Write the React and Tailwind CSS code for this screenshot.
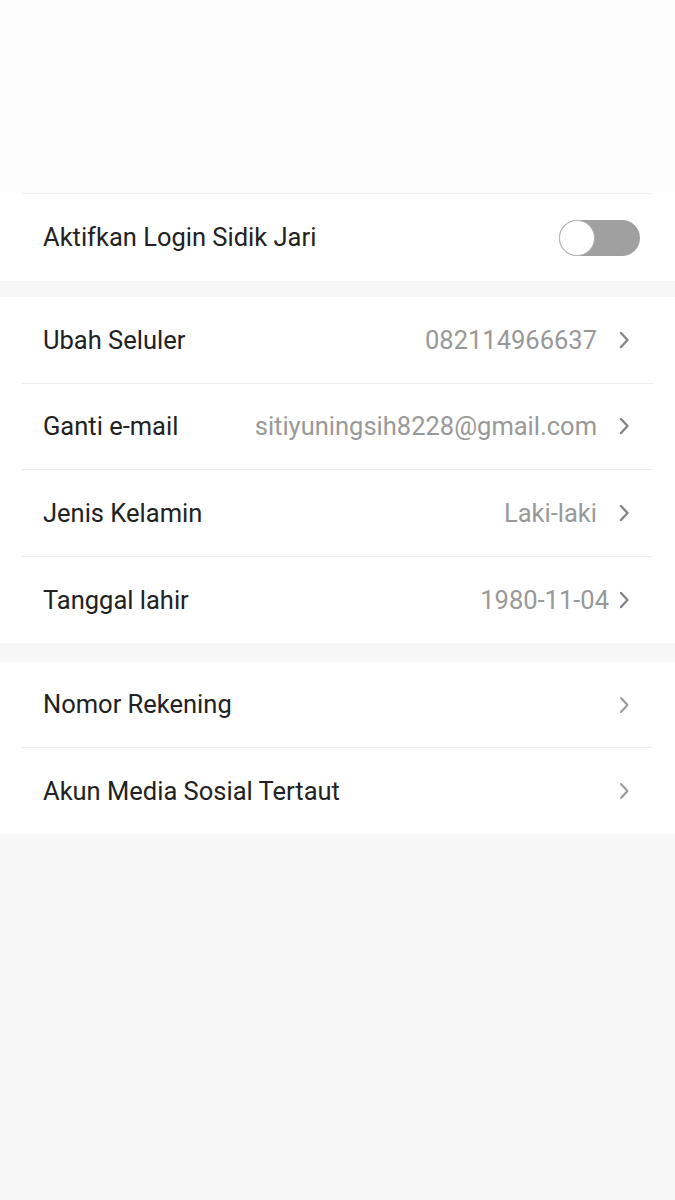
import React from "react";

const Chevron = ({ light }) => (
    <svg
        width="14"
        height="20"
        viewBox="0 0 14 20"
        fill="none"
        className="shrink-0"
    >
        <path
            d="M4 3 L10.5 10 L4 17"
            stroke={light ? "#9a9a9a" : "#858585"}
            strokeWidth={light ? "2" : "2.4"}
            strokeLinecap="round"
            strokeLinejoin="round"
        />
    </svg>
);

const Row = ({ label, value, tight, light, last, tall }) => (
    <div className="px-[22px]">
        <div
            className={
                "flex items-center pl-[21px] pr-[22px] " +
                (tall ? "h-[86.5px] " : "h-[86px] ") +
                (last ? "" : "border-b border-[#ececec]")
            }
        >
            <span className="flex-1 text-[25.5px] text-[#222222]">{label}</span>
            {value && (
                <span
                    className={
                        "text-[25.5px] text-[#999999] " + (tight ? "mr-[8px]" : "mr-[20px]")
                    }
                >
                    {value}
                </span>
            )}
            <Chevron light={light} />
        </div>
    </div>
);

const App = () => {
    return (
        <div
            className="w-[675px] min-h-[1200px] bg-[#f7f7f7]"
            style={{ fontFamily: "Roboto, 'Liberation Sans', sans-serif" }}
        >
            {/* HEADER SPACE */}
            <div className="h-[193px] bg-[#fdfdfd]" />

            {/* FINGERPRINT */}
            <div className="bg-white">
                <div className="px-[22px]">
                    <div className="flex items-center h-[88px] pl-[21px] pr-[13px] border-t border-[#efefef]">
                        <span className="flex-1 text-[25.5px] text-[#222222]">
                            Aktifkan Login Sidik Jari
                        </span>
                        <div className="relative w-[81px] h-[36px] rounded-full bg-[#a0a0a0]">
                            <div className="absolute left-0 top-0 w-[36px] h-[36px] rounded-full bg-white border border-[#b5b5b5]" />
                        </div>
                    </div>
                </div>
            </div>

            <div className="h-[16px]" />

            {/* PROFILE */}
            <div className="bg-white">
                <Row label="Ubah Seluler" value="082114966637" tall />
                <Row label="Ganti e-mail" value="sitiyuningsih8228@gmail.com" tall />
                <Row label="Jenis Kelamin" value="Laki-laki" tall />
                <Row label="Tanggal lahir" value="1980-11-04" tight last tall />
            </div>

            <div className="h-[19px]" />

            {/* ACCOUNTS */}
            <div className="bg-white">
                <Row label="Nomor Rekening" light />
                <Row label="Akun Media Sosial Tertaut" light last />
            </div>
        </div>
    );
};

export default App;
